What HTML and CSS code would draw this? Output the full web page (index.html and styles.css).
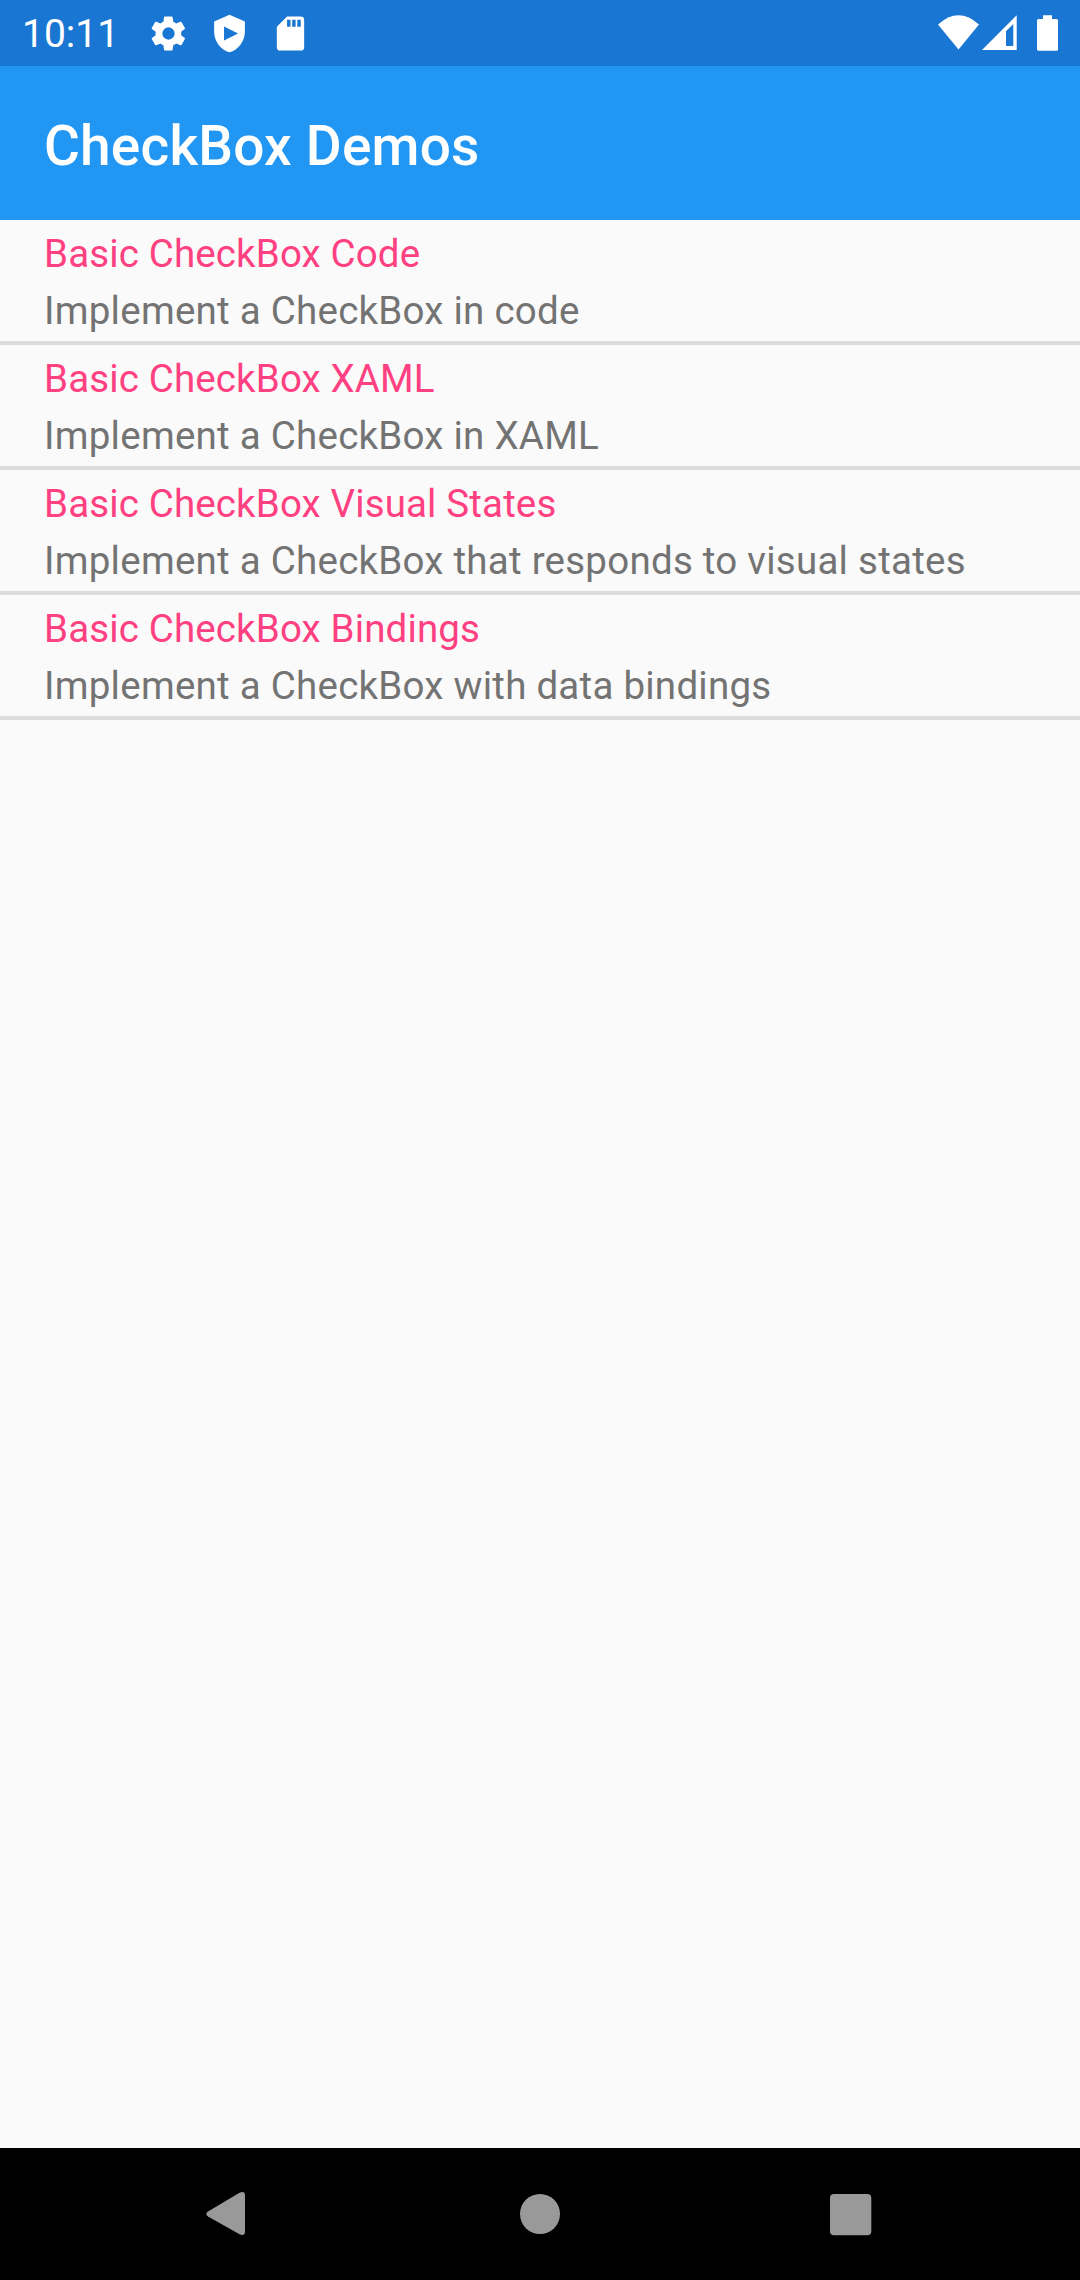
FILE: index.html
```html
<!DOCTYPE html>
<html lang="en">
<head>
<meta charset="utf-8">
<title>CheckBox Demos</title>
<link rel="stylesheet" href="styles.css">
</head>
<body>
<div class="status">
  <span class="clock">10:11</span>
  <div class="notifications">
    <svg class="icon" viewBox="0 0 24 24"><path d="M19.400 13a7.500 7.500 0 0 0 0-2l2.100-1.600a.5.5 0 0 0 .1-.6l-2-3.500a.5.5 0 0 0-.6-.2l-2.500 1a7.300 7.300 0 0 0-1.700-1l-.4-2.600a.5.5 0 0 0-.5-.4h-4a.5.5 0 0 0-.5.4L9 5.100a7.300 7.300 0 0 0-1.700 1l-2.500-1a.5.5 0 0 0-.6.2l-2 3.500a.5.5 0 0 0 .1.600L4.500 11a7.500 7.500 0 0 0 0 2l-2.200 1.600a.5.5 0 0 0-.1.600l2 3.500c.1.200.4.300.6.200l2.500-1a7.300 7.300 0 0 0 1.700 1l.4 2.600c0 .2.200.4.500.4h4c.2 0 .5-.2.500-.4l.4-2.600a7.300 7.300 0 0 0 1.700-1l2.500 1c.2.100.5 0 .6-.2l2-3.500a.5.5 0 0 0-.1-.6zM12 15.600a3.600 3.600 0 1 1 0-7.200 3.600 3.600 0 0 1 0 7.200z"/></svg>
    <svg class="icon" viewBox="0 0 24 24"><path fill-rule="evenodd" d="M12 1 3 5v6c0 5.550 3.840 10.740 9 12 5.160-1.260 9-6.450 9-12V5zM8.800 7.900l8.200 4.100-8.200 4.100z"/></svg>
    <svg class="icon" viewBox="0 0 24 24"><path fill-rule="evenodd" d="M18 2h-8L4 8v12a2 2 0 0 0 2 2h12a2 2 0 0 0 2-2V4a2 2 0 0 0-2-2zM10 4h2v4h-2zm3 0h2v4h-2zm3 0h2v4h-2z"/></svg>
  </div>
  <svg class="system" viewBox="0 0 124 40">
    <path d="M4 11.500Q24.500-7 45 11.500L24.500 36.500z"/>
    <path fill-rule="evenodd" d="M82.700 2.300V37H48zM79.300 11 72 18.200V33h7.300z"/>
    <path d="M109 2.300h9V6h4.500q1.500 0 1.500 1.500v28.800q0 1.500-1.500 1.500h-18q-1.500 0-1.500-1.500V7.500q0-1.500 1.500-1.500h4.500z"/>
  </svg>
</div>
<header class="toolbar"><h1>CheckBox Demos</h1></header>
<main class="list">
  <div class="row"><div class="title">Basic CheckBox Code</div><div class="detail">Implement a CheckBox in code</div></div>
  <div class="row"><div class="title">Basic CheckBox XAML</div><div class="detail">Implement a CheckBox in XAML</div></div>
  <div class="row"><div class="title">Basic CheckBox Visual States</div><div class="detail">Implement a CheckBox that responds to visual states</div></div>
  <div class="row"><div class="title">Basic CheckBox Bindings</div><div class="detail">Implement a CheckBox with data bindings</div></div>
</main>
<nav class="navbar">
  <svg class="key" viewBox="0 0 60 60"><path d="M8 27.500 39.500 8.700Q45 6.500 45 11.500V47.500Q45 52.500 39.500 50.300L8 32.500Q4.500 30 8 27.500z"/></svg>
  <svg class="key" viewBox="0 0 60 60"><circle cx="30" cy="30" r="20"/></svg>
  <svg class="key" viewBox="0 0 60 60"><rect x="10" y="10" width="41.300" height="41.300" rx="4"/></svg>
</nav>
</body>
</html>
```
FILE: styles.css
```css
body {
  margin: 0;
  width: 1080px;
  height: 2280px;
  display: flex;
  flex-direction: column;
  background: #fafafa;
  font-family: Roboto, sans-serif;
}
.status {
  height: 66px;
  display: flex;
  align-items: center;
  box-sizing: border-box;
  padding: 0 22px;
  background: #1976d2;
  color: #fff;
  fill: #fff;
}
.clock {
  font-size: 39px;
  padding-top: 2px;
}
.notifications {
  display: flex;
  gap: 20px;
  margin-left: 29px;
}
.icon {
  width: 41px;
  height: 41px;
}
.system {
  width: 124px;
  height: 40px;
  margin-left: auto;
}
.toolbar {
  height: 154px;
  display: flex;
  align-items: center;
  box-sizing: border-box;
  padding: 5px 44px 0;
  background: #2196f3;
  color: #fff;
}
h1 {
  margin: 0;
  font-size: 55px;
  font-weight: 500;
  letter-spacing: .2px;
}
.list {
  flex: 1;
}
.row {
  height: 116px;
  padding: 5px 44px 0;
  border-bottom: 4px solid #dcdcdc;
  font-size: 38.5px;
  line-height: 57px;
}
.title {
  color: #ff4081;
  letter-spacing: .14px;
}
.detail {
  color: #737373;
  letter-spacing: .25px;
}
.navbar {
  height: 132px;
  display: flex;
  align-items: center;
  justify-content: center;
  gap: 250px;
  background: #000;
  fill: #999;
}
.key {
  width: 60px;
  height: 60px;
}
```
